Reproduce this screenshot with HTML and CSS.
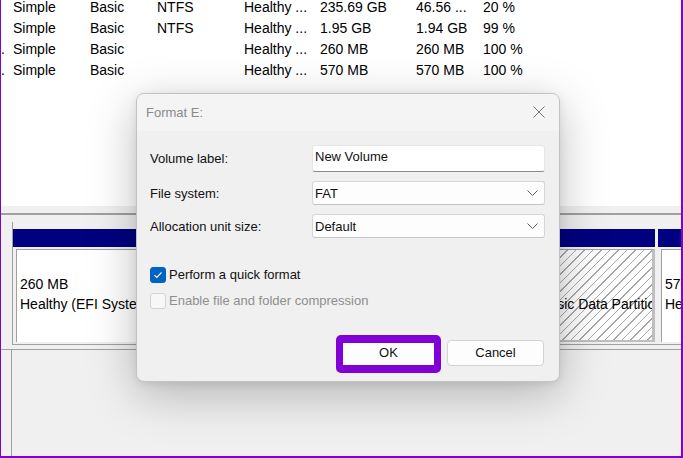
FILE: index.html
```html
<!DOCTYPE html>
<html>
<head>
<meta charset="utf-8">
<link rel="stylesheet" href="styles.css">
</head>
<body>
<div class="screen">
  <div class="list">
    <div class="rows">
      <div class="row"><span></span><span>Simple</span><span>Basic</span><span>NTFS</span><span>Healthy ...</span><span>235.69 GB</span><span>46.56 ...</span><span>20 %</span></div>
      <div class="row"><span></span><span>Simple</span><span>Basic</span><span>NTFS</span><span>Healthy ...</span><span>1.95 GB</span><span>1.94 GB</span><span>99 %</span></div>
      <div class="row"><span>.</span><span>Simple</span><span>Basic</span><span></span><span>Healthy ...</span><span>260 MB</span><span>260 MB</span><span>100 %</span></div>
      <div class="row"><span>.</span><span>Simple</span><span>Basic</span><span></span><span>Healthy ...</span><span>570 MB</span><span>570 MB</span><span>100 %</span></div>
    </div>
  </div>
  <div class="split"></div>
  <div class="disks">
    <div class="disk">
      <div class="parts">
        <div class="part p1">
          <div class="part-head"></div>
          <div class="part-body"><div class="clip">260 MB</div><div class="clip">Healthy (EFI System Partition)</div></div>
        </div>
        <div class="part p2">
          <div class="part-head"></div>
          <div class="part-body"></div>
        </div>
        <div class="part p3">
          <div class="part-head"></div>
          <div class="part-body hatched"><div class="spacer"></div><div class="clip shift">Healthy (Basic Data Partition)</div></div>
        </div>
        <div class="part p4">
          <div class="part-head"></div>
          <div class="part-body"><div class="clip">570 MB</div><div class="clip">Healthy (Recovery Partition)</div></div>
        </div>
      </div>
    </div>
    <div class="disk2"><div class="disk2-inner"></div></div>
  </div>

  <div class="dialog">
    <div class="titlebar">
      <span class="title">Format E:</span>
      <svg class="close" width="12" height="12" viewBox="0 0 12 12"><path d="M0.5 0.5 L11.5 11.5 M11.5 0.5 L0.5 11.5" stroke="#707070" stroke-width="1" fill="none"/></svg>
    </div>
    <div class="dbody">
      <div class="form">
        <label class="lbl">Volume label:</label>
        <div class="textbox">New Volume</div>
        <label class="lbl">File system:</label>
        <div class="combo"><span>FAT</span><svg width="11" height="6" viewBox="0 0 11 6"><path d="M0.5 0.5 L5.5 5.5 L10.5 0.5" stroke="#5c5c5c" stroke-width="1" fill="none"/></svg></div>
        <label class="lbl">Allocation unit size:</label>
        <div class="combo"><span>Default</span><svg width="11" height="6" viewBox="0 0 11 6"><path d="M0.5 0.5 L5.5 5.5 L10.5 0.5" stroke="#5c5c5c" stroke-width="1" fill="none"/></svg></div>
      </div>
      <div class="checks">
        <div class="check">
          <span class="box on"><svg width="16" height="16" viewBox="0 0 16 16"><path d="M4.5 8.2 L6.8 10.5 L11.5 5.5" stroke="#fff" stroke-width="1.1" fill="none"/></svg></span>
          <span>Perform a quick format</span>
        </div>
        <div class="check disabled">
          <span class="box"></span>
          <span>Enable file and folder compression</span>
        </div>
      </div>
      <div class="buttons">
        <div class="btn ok">OK</div>
        <div class="btn">Cancel</div>
      </div>
    </div>
  </div>
</div>
</body>
</html>
```

FILE: styles.css
```css
* { box-sizing: border-box; }
html, body { margin: 0; padding: 0; }
body {
  width: 683px;
  height: 458px;
  overflow: hidden;
  font-family: "Liberation Sans", Arial, sans-serif;
  background: #fff;
}
.screen {
  position: relative;
  width: 683px;
  height: 458px;
  border-left: 1px solid #8000d6;
  border-right: 2px solid #8000d6;
  border-bottom: 2px solid #8000d6;
  display: flex;
  flex-direction: column;
  overflow: hidden;
}
.list {
  height: 206px;
  background: #fff;
  flex: none;
  overflow: hidden;
}
.rows { margin-top: -3px; }
.row {
  display: grid;
  grid-template-columns: 12px 77px 67px 87px 76px 96px 67px 1fr;
  height: 21px;
  line-height: 21px;
  font-size: 14px;
  color: #000;
  white-space: nowrap;
}
.split {
  flex: none;
  height: 9px;
  background: #f0f0f0;
  border-bottom: 2px solid #a0a0a0;
}
.disks {
  flex: 1;
  background: #f0f0f0;
  display: flex;
  flex-direction: column;
}
.disk {
  margin-top: 7px;
  padding-left: 11px;
  flex: none;
}
.parts {
  display: flex;
  gap: 3px;
  padding-top: 7px;
  height: 123px;
  border-bottom: 1px solid #a0a0a0;
  border-left: 1px solid #a0a0a0;
  overflow: hidden;
}
.part {
  display: flex;
  flex-direction: column;
  flex: none;
}
.p1 { width: 124px; }
.p2 { width: 328px; }
.p3 { width: 184px; }
.p4 { width: 100px; }
.part-head {
  height: 18px;
  background: #000080;
}
.part-body {
  margin-top: 2px;
  margin-left: 3px;
  height: 93px;
  background: #fff;
  border-top: 1px solid #a0a0a0;
  border-left: 1px solid #a0a0a0;
  padding: 24px 0 0 3px;
  font-size: 14px;
  line-height: 20px;
  color: #000;
  white-space: nowrap;
  overflow: hidden;
}
.spacer { height: 20px; }
.part-body.hatched {
  padding-left: 0;
  border-right: 3px solid #bfbfbf;
  border-bottom: 2px solid #bfbfbf;
  background: repeating-linear-gradient(135deg, #ffffff 0px, #ffffff 5px, #a8a8a8 5px, #a8a8a8 6px);
}
.clip {
  overflow: hidden;
  text-overflow: clip;
}
.clip.shift { margin-left: 9px; }
.disk2 {
  flex: 1;
  margin-top: 4px;
  border-top: 1px solid #a0a0a0;
}
.disk2-inner {
  margin-left: 10px;
  height: 100%;
  border-left: 1px solid #a0a0a0;
}

/* dialog */
.dialog {
  position: absolute;
  left: 135px;
  top: 93px;
  width: 424px;
  height: 289px;
  border: 1px solid #c2c2c2;
  border-radius: 8px;
  background: #f0f0f0;
  box-shadow: 0 12px 48px rgba(0,0,0,0.26), 0 2px 8px rgba(0,0,0,0.08);
  overflow: hidden;
  font-size: 13px;
  color: #111;
}
.titlebar {
  height: 37px;
  background: #f4f4f4;
  display: flex;
  align-items: center;
  justify-content: space-between;
  padding: 0 14px 0 9px;
}
.title { color: #8a8a8a; font-size: 13px; }
.close { display: block; margin-top: -1px; }
.dbody {
  padding: 14px 14px 0 13px;
}
.form {
  display: grid;
  grid-template-columns: 162px 233px;
  grid-template-rows: 27px 24px 24px;
  row-gap: 9px;
  align-items: center;
}
.lbl { color: #111; }
.textbox {
  height: 27px;
  background: #fff;
  border: 1px solid #e6e6e6;
  border-bottom: 1px solid #8a8a8a;
  border-radius: 3px;
  padding: 3px 0 0 2px;
  line-height: 16px;
  color: #111;
}
.combo {
  height: 24px;
  background: #fdfdfd;
  border: 1px solid #d6d6d6;
  border-bottom-color: #c4c4c4;
  border-radius: 3px;
  display: flex;
  align-items: center;
  justify-content: space-between;
  padding: 0 6px 0 2px;
  color: #111;
}
.combo svg { display: block; }
.checks {
  margin-top: 29px;
  display: flex;
  flex-direction: column;
  gap: 10px;
}
.check {
  display: flex;
  align-items: center;
  gap: 3px;
  height: 16px;
  line-height: 16px;
  color: #111;
}
.check.disabled { color: #8e8e8e; }
.box {
  width: 16px;
  height: 16px;
  border-radius: 3px;
  border: 1px solid #d4d4d4;
  background: #f7f7f7;
  flex: none;
  display: block;
}
.box.on {
  background: #0063c1;
  border-color: #0063c1;
}
.box.on svg { display: block; margin: -1px 0 0 -1px; }
.buttons {
  margin-top: 31px;
  display: flex;
  justify-content: flex-end;
  gap: 10px;
  padding-right: 1px;
}
.btn {
  position: relative;
  width: 97px;
  height: 26px;
  background: #fdfdfd;
  border: 1px solid #d3d3d3;
  border-radius: 4px;
  text-align: center;
  line-height: 24px;
  color: #111;
}
.btn.ok::after {
  content: "";
  position: absolute;
  top: -6px;
  left: -5px;
  right: -5px;
  bottom: -8px;
  border: 8px solid #8000d6;
  border-left-width: 7px;
  border-right-width: 7px;
  border-radius: 5px;
}
```
